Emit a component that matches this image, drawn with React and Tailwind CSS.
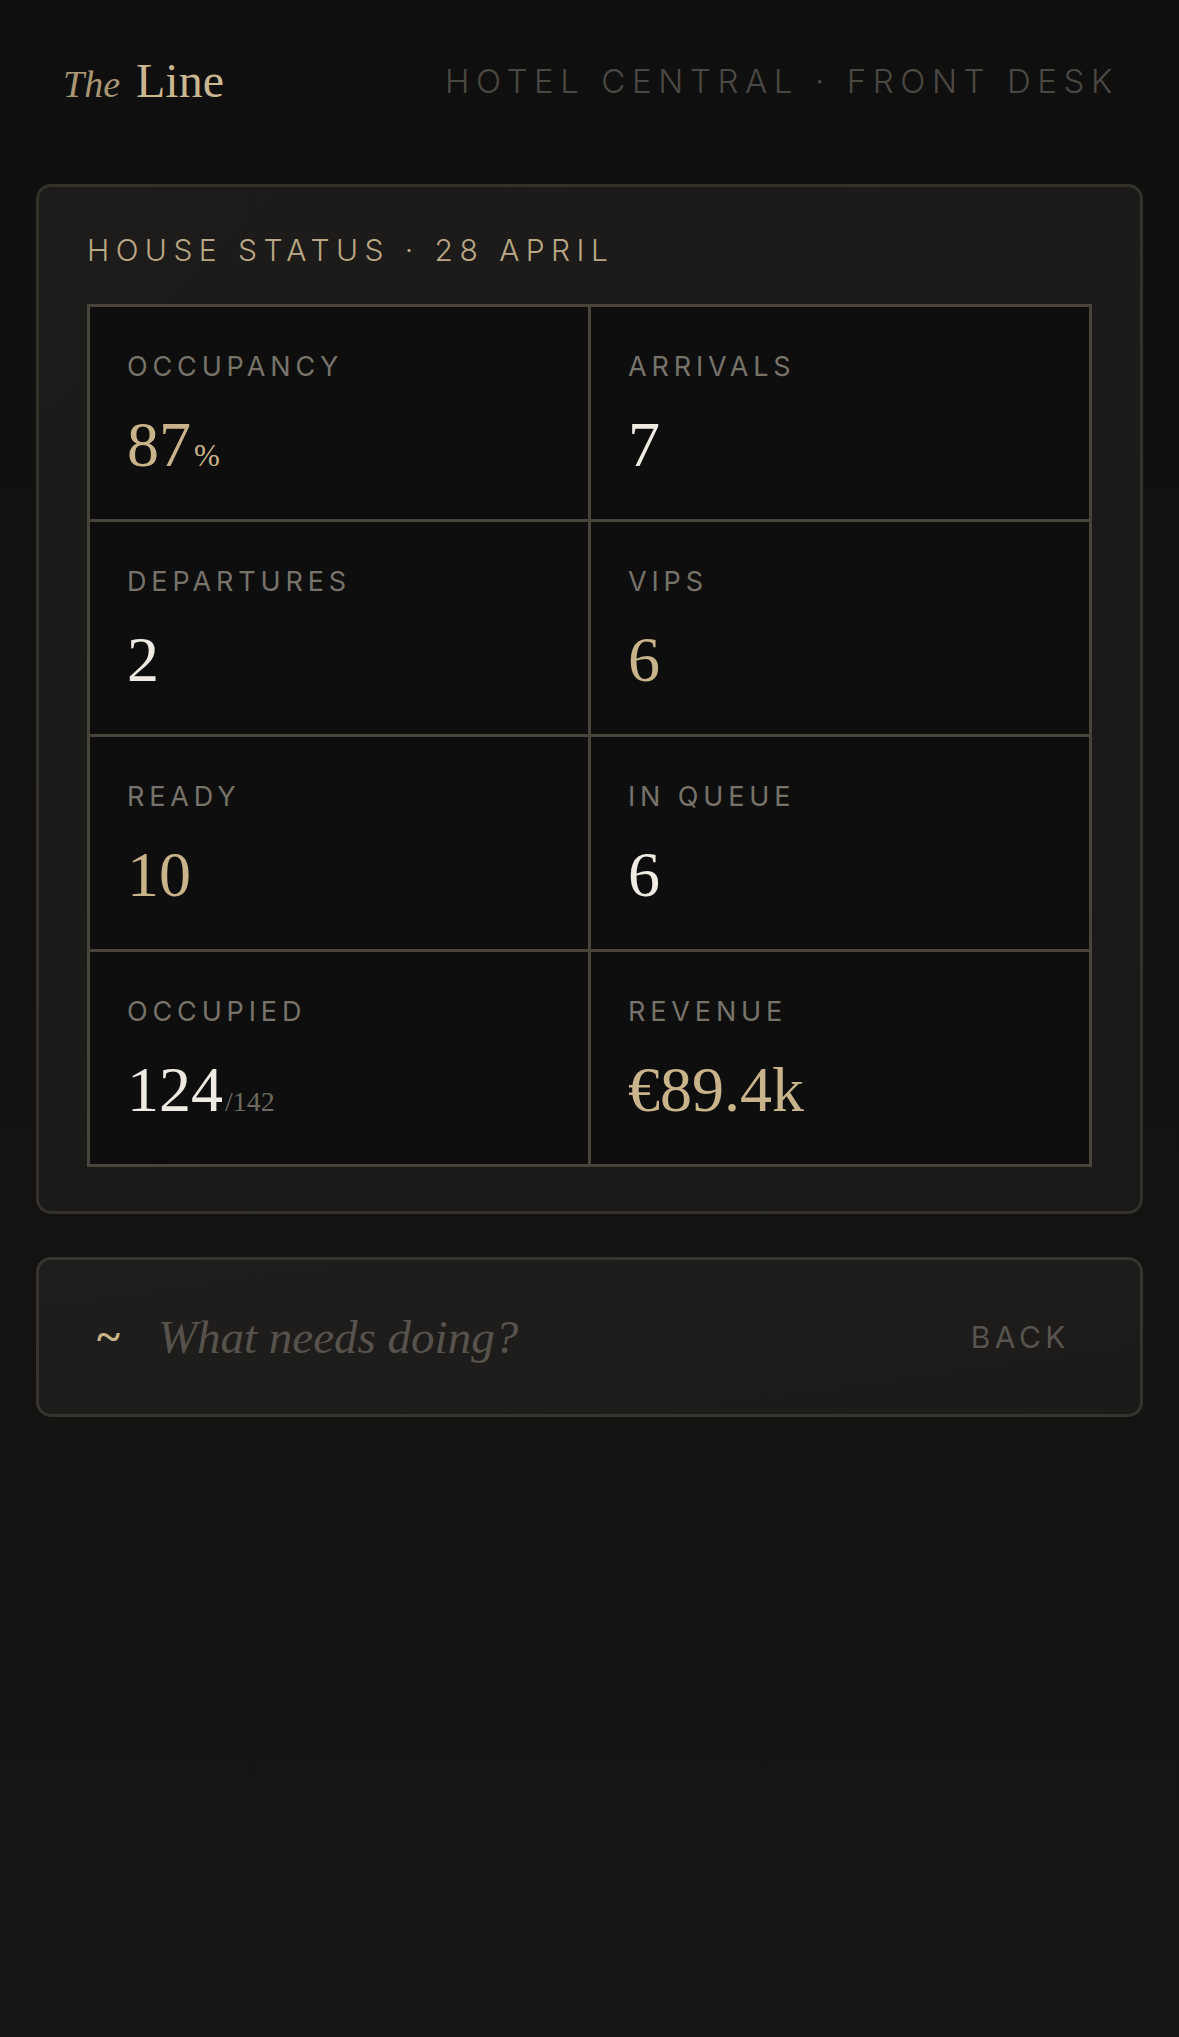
import React from "react";

const serif = "font-['Liberation_Serif','Times_New_Roman',serif]";
const sans = "font-['Inter','Liberation_Sans',sans-serif]";

function Cell({ label, children }) {
  return (
    <div className="h-[212px] bg-[#0e0e0e] pl-[37px] pt-[46px]">
      <div className={`${sans} text-[27px] leading-[27px] tracking-[0.18em] text-[#77736b]`}>{label}</div>
      <div className={`${serif} mt-[33px] flex items-baseline text-[64px] leading-[64px]`}>{children}</div>
    </div>
  );
}

export default function App() {
  return (
    <div className="min-h-[2037px] w-full bg-gradient-to-b from-[#0f0f0f] to-[#161513]">
      <header className="flex h-[162px] items-center justify-between pl-[63px] pr-[60px]">
        <div className={`${serif} flex items-baseline`}>
          <span className="text-[38px] italic leading-none text-[#a99675]">The</span>
          <span className="ml-[16px] text-[48px] leading-none text-[#cab791]">Line</span>
        </div>
        <div className={`${sans} text-[33px] font-light leading-none tracking-[0.2em] text-[#4b4843]`}>
          HOTEL CENTRAL · FRONT DESK
        </div>
      </header>

      <section className="mx-[36px] mt-[22px] rounded-[15px] border-[3px] border-[#34312a] bg-gradient-to-br from-[#1d1c1a] to-[#1a1917] px-[48px] pb-[44px] pt-[48px]">
        <h2 className={`${sans} text-[30px] font-light leading-[30px] tracking-[0.215em] text-[#b9a785]`}>
          HOUSE STATUS · 28 APRIL
        </h2>
        <div className="mt-[39px] grid grid-cols-2 gap-[3px] bg-[#48443a] p-[3px]">
          <Cell label="OCCUPANCY">
            <span className="text-[#c8b38b]">87</span>
            <span className="ml-[3px] text-[31px] text-[#c8b38b]">%</span>
          </Cell>
          <Cell label="ARRIVALS">
            <span className="text-[#efebe3]">7</span>
          </Cell>
          <Cell label="DEPARTURES">
            <span className="text-[#efebe3]">2</span>
          </Cell>
          <Cell label="VIPS">
            <span className="text-[#c8b38b]">6</span>
          </Cell>
          <Cell label="READY">
            <span className="text-[#c8b38b]">10</span>
          </Cell>
          <Cell label="IN QUEUE">
            <span className="text-[#efebe3]">6</span>
          </Cell>
          <Cell label="OCCUPIED">
            <span className="text-[#efebe3]">124</span>
            <span className="ml-[2px] text-[28px] text-[#6d695f]">/142</span>
          </Cell>
          <Cell label="REVENUE">
            <span className="text-[#c8b38b]">€89.4k</span>
          </Cell>
        </div>
      </section>

      <section className="mx-[36px] mt-[43px] flex h-[160px] items-center rounded-[15px] border-[3px] border-[#37342d] bg-gradient-to-br from-[#1f1e1c] to-[#1c1b19] pl-[58px] pr-[70px]">
        <span className={`${serif} text-[44px] font-bold leading-none text-[#c8b38b]`}>~</span>
        <span className={`${serif} ml-[38px] flex-1 text-[47px] italic leading-none text-[#57534c]`}>
          What needs doing?
        </span>
        <span className={`${sans} text-[30px] leading-none tracking-[0.15em] text-[#57544e]`}>BACK</span>
      </section>
    </div>
  );
}
